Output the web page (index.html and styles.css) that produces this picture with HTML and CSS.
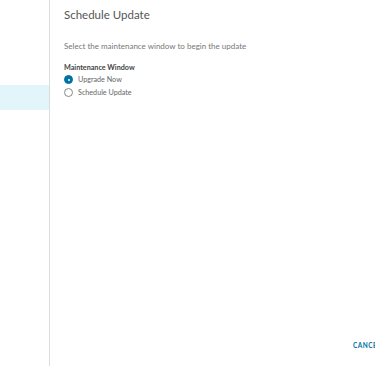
FILE: index.html
```html
<!DOCTYPE html>
<html lang="en">
<head>
    <meta charset="UTF-8">
    <meta name="viewport" content="width=device-width, initial-scale=1.0">
    <title>Schedule Update</title>
    <link rel="stylesheet" href="styles.css">
</head>
<body>

    <div class="layout">
        <!-- Menu lateral -->
        <div class="sidebar">
            <div class="nav-item active"></div>
        </div>

        <!-- Contenido del asistente -->
        <div class="content">
            <h2 class="title">Schedule Update</h2>
            <p class="subtitle">Select the maintenance window to begin the update</p>

            <div class="field">
                <div class="label">Maintenance Window</div>
                <label class="radio">
                    <span class="dot checked"></span>
                    Upgrade Now
                </label>
                <label class="radio">
                    <span class="dot"></span>
                    Schedule Update
                </label>
            </div>

            <div class="footer">
                <button class="btn-link">CANCEL</button>
            </div>
        </div>
    </div>

</body>
</html>
```

FILE: styles.css
```css
/* Estilos generales */
body {
    font-family: 'Lato', 'Open Sans', sans-serif;
    background-color: #fff;
    color: #333;
    margin: 0;
    height: 366px;
    overflow: hidden;
}

.layout {
    display: flex;
    height: 100%;
}

/* Menu lateral */
.sidebar {
    width: 50px;
    flex-shrink: 0;
    border-right: 1px solid #dcdcdc;
    padding-top: 85px;
    box-sizing: border-box;
}

.nav-item {
    height: 25px;
}

.nav-item.active {
    background: #e1f5fb;
}

/* Contenido */
.content {
    flex: 1;
    display: flex;
    flex-direction: column;
    padding: 7px 0 0 14px;
    min-width: 0;
}

.title {
    font-size: 11.5px;
    font-weight: 400;
    color: #555;
    margin: 0;
    line-height: 16px;
}

.subtitle {
    font-size: 8px;
    color: #777;
    margin: 18px 0 0;
    line-height: 10px;
}

.field {
    margin-top: 12px;
}

.label {
    font-size: 7.2px;
    font-weight: 700;
    color: #444;
    line-height: 10px;
}

.radio {
    display: flex;
    align-items: center;
    gap: 5px;
    font-size: 7.2px;
    color: #666;
    height: 13px;
}

.dot {
    width: 7px;
    height: 7px;
    border: 1px solid #888;
    border-radius: 50%;
    box-sizing: content-box;
    position: relative;
}

.dot.checked {
    border-color: #0072a3;
    background: #0072a3;
}

.dot.checked::after {
    content: "";
    position: absolute;
    left: 2.5px;
    top: 2.5px;
    width: 2px;
    height: 2px;
    border-radius: 50%;
    background: #fff;
}

/* Pie con botones */
.footer {
    margin-top: auto;
    display: flex;
    padding: 0 0 17px 289px;
    white-space: nowrap;
}

button {
    border: none;
    background: none;
    font-family: inherit;
    font-size: 6.5px;
    font-weight: 700;
    letter-spacing: 0.5px;
    padding: 0;
    cursor: pointer;
}

.btn-link {
    color: #0072a3;
}
```
